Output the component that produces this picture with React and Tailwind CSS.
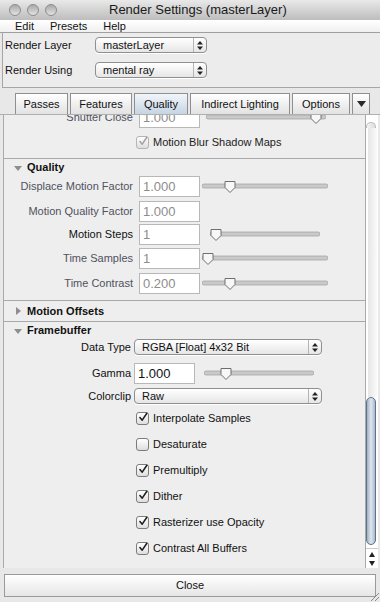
import React from "react";

const font = { fontFamily: '"Liberation Sans", Arial, sans-serif' };

// small up/down arrows used in popup menus
const UpDown = () => (
  <svg width="6" height="9" viewBox="0 0 6 9">
    <path d="M3 0 L6 3.5 L0 3.5 Z" fill="#222" />
    <path d="M3 9 L6 5.5 L0 5.5 Z" fill="#222" />
  </svg>
);

const Dropdown = ({ value, w }) => (
  <div
    className={`flex h-[16px] items-center rounded-[4px] border border-[#8f8f8f] bg-gradient-to-b from-white to-[#e6e6e6] shadow-[0_1px_0_#fff] ${w}`}
  >
    <span className="flex-1 pl-[7px] text-[11px] leading-none text-[#111]">{value}</span>
    <div className="flex h-full w-[13px] items-center justify-center border-l border-[#b5b5b5]">
      <UpDown />
    </div>
  </div>
);

const Field = ({ value, dim }) => (
  <div
    className={`flex h-[21px] w-[61px] items-center border border-[#b8b8b8] bg-white pl-[3px] text-[13px] ${
      dim ? "text-[#8d8d8d]" : "text-[#111]"
    }`}
  >
    {value}
  </div>
);

// slider track with pointed thumb
const Slider = ({ width, thumb }) => (
  <svg width={width} height="14" viewBox={`0 0 ${width} 14`}>
    <rect x="0" y="4" width={width} height="4" rx="2" fill="#c9c9c9" stroke="#a6a6a6" strokeWidth="0.8" />
    <path
      d={`M${thumb - 5} 1.5 h10 v6 l-5 5 l-5 -5 Z`}
      fill="#f7f7f7"
      stroke="#6f6f6f"
      strokeWidth="1"
    />
  </svg>
);

const Check = ({ on, dim }) => (
  <div
    className={`flex h-[13px] w-[13px] items-center justify-center rounded-[3px] border bg-gradient-to-b from-white to-[#dedede] ${
      dim ? "border-[#b4b4b4]" : "border-[#7c7c7c]"
    }`}
  >
    {on && (
      <svg width="13" height="13" viewBox="0 0 13 13" className="-mt-[2px] ml-[1px]">
        <path
          d="M2.5 6.5 L5.5 10 L11.5 1"
          fill="none"
          stroke={dim ? "#a3a3a3" : "#1d1d1d"}
          strokeWidth="2"
          strokeLinecap="round"
          strokeLinejoin="round"
        />
      </svg>
    )}
  </div>
);

const CheckRow = ({ label, on, dim, className = "" }) => (
  <div className={`flex h-[16px] items-center pl-[132px] ${className}`}>
    <Check on={on} dim={dim} />
    <span className={`ml-[4px] text-[11px] ${dim ? "text-[#222]" : "text-[#111]"}`}>{label}</span>
  </div>
);

const SliderRow = ({ label, value, dimLabel, dimValue, slider, className = "" }) => (
  <div className={`flex h-[21px] items-center ${className}`}>
    <span
      className={`w-[131px] pr-[2px] text-right text-[11px] ${dimLabel ? "text-[#4f5260]" : "text-[#111]"}`}
    >
      {label}
    </span>
    <div className="ml-[4px]">
      <Field value={value} dim={dimValue} />
    </div>
    {slider && <div className={slider.ml}><Slider width={slider.w} thumb={slider.t} /></div>}
  </div>
);

const Header = ({ label, open }) => (
  <div className="flex h-[17px] items-center pl-[9px]">
    <svg width="10" height="10" viewBox="0 0 10 10">
      {open ? <path d="M1 3 L9 3 L5 8 Z" fill="#8e8e8e" /> : <path d="M3 1 L8 5 L3 9 Z" fill="#8e8e8e" />}
    </svg>
    <span className="ml-[4px] text-[11px] font-bold text-[#111]">{label}</span>
  </div>
);

const tabs = [
  { label: "Passes", w: "w-[53px]" },
  { label: "Features", w: "w-[62px]" },
  { label: "Quality", w: "w-[54px]", active: true },
  { label: "Indirect Lighting", w: "w-[100px]" },
  { label: "Options", w: "w-[58px]" },
];

export default function App() {
  return (
    <div style={font} className="flex h-[602px] w-[380px] flex-col overflow-hidden bg-[#e8e8e8] text-[#111]">
      {/* title bar */}
      <div className="flex h-[20px] items-center bg-gradient-to-b from-[#e9e9e9] to-[#bdbdbd]">
        <div className="flex items-center gap-[6px] pl-[9px]">
          {[0, 1, 2].map((i) => (
            <div
              key={i}
              className="h-[12px] w-[12px] rounded-full border border-[#8c8c8c] bg-gradient-to-b from-[#a9a9a9] to-[#e3e3e3]"
            />
          ))}
        </div>
        <span className="ml-[52px] text-[13px] text-[#1a1a1a]">Render Settings (masterLayer)</span>
      </div>

      {/* menu bar */}
      <div className="flex h-[13px] items-center border-b border-[#9f9f9f] bg-gradient-to-b from-white to-[#f0f0f0] text-[11px]">
        <span className="ml-[15px]">Edit</span>
        <span className="ml-[16px]">Presets</span>
        <span className="ml-[16px]">Help</span>
      </div>

      {/* render layer / render using */}
      <div className="ml-[2px] flex h-[55px] flex-col border-b border-l border-[#a6a6a6] bg-[#ececec] pt-[4px]">
        <div className="flex h-[16px] items-center">
          <span className="w-[92px] pl-[2px] text-[11px]">Render Layer</span>
          <Dropdown value="masterLayer" w="w-[112px]" />
        </div>
        <div className="mt-[9px] flex h-[16px] items-center">
          <span className="w-[92px] pl-[2px] text-[11px]">Render Using</span>
          <Dropdown value="mental ray" w="w-[112px]" />
        </div>
      </div>

      {/* tabs */}
      <div className="mt-[5px] flex h-[22px] items-start border-b border-[#b0b0b0] pl-[15px]">
        {tabs.map((t) => (
          <div
            key={t.label}
            className={`mr-[2px] flex h-[21px] items-center justify-center border border-b-0 border-[#8f8f8f] text-[11px] ${t.w} ${
              t.active
                ? "bg-gradient-to-b from-[#f2f6fa] to-[#c6d4e3]"
                : "bg-gradient-to-b from-white to-[#e2e2e2]"
            }`}
          >
            {t.label}
          </div>
        ))}
        <div className="flex h-[21px] w-[18px] items-center justify-center border border-b-0 border-[#8f8f8f] bg-gradient-to-b from-white to-[#e2e2e2]">
          <svg width="9" height="6" viewBox="0 0 9 6">
            <path d="M0 0 H9 L4.5 6 Z" fill="#2a2a2a" />
          </svg>
        </div>
      </div>

      {/* scrolling content + scrollbar */}
      <div className="flex h-[453px]">
        <div className="ml-[3px] w-[363px] overflow-hidden border-l border-r border-[#a9a9a9] bg-[#eeeeee]">
          <div className="-mt-[8px]">
            <SliderRow
              label="Shutter Close"
              value="1.000"
              dimLabel
              dimValue
              slider={{ w: 120, t: 110, ml: "ml-[6px]" }}
            />
            <CheckRow label="Motion Blur Shadow Maps" on dim className="mt-[6px]" />
            <div className="h-[8px]" />
          </div>

          {/* Quality */}
          <div className="border-t border-[#a9a9a9] pb-[6px]">
            <Header label="Quality" open />
            <SliderRow
              label="Displace Motion Factor"
              value="1.000"
              dimLabel
              dimValue
              slider={{ w: 126, t: 28, ml: "ml-[2px]" }}
            />
            <SliderRow
              label="Motion Quality Factor"
              value="1.000"
              dimLabel
              dimValue
              className="mt-[4px]"
            />
            <SliderRow
              label="Motion Steps"
              value="1"
              dimValue
              className="mt-[2px]"
              slider={{ w: 110, t: 6, ml: "ml-[10px]" }}
            />
            <SliderRow
              label="Time Samples"
              value="1"
              dimLabel
              dimValue
              className="mt-[3px]"
              slider={{ w: 126, t: 6, ml: "ml-[2px]" }}
            />
            <SliderRow
              label="Time Contrast"
              value="0.200"
              dimLabel
              dimValue
              className="mt-[4px]"
              slider={{ w: 126, t: 28, ml: "ml-[2px]" }}
            />
          </div>

          {/* Motion Offsets */}
          <div className="flex h-[21px] items-center border-t border-[#a9a9a9]">
            <Header label="Motion Offsets" />
          </div>

          {/* Framebuffer */}
          <div className="border-t border-[#a9a9a9] pb-[12px]">
            <Header label="Framebuffer" open />
            <div className="flex h-[16px] items-center">
              <span className="w-[127px] text-right text-[11px]">Data Type</span>
              <div className="ml-[3px]">
                <Dropdown value="RGBA [Float] 4x32 Bit" w="w-[188px]" />
              </div>
            </div>
            <div className="mt-[8px] flex h-[21px] items-center">
              <span className="w-[127px] text-right text-[11px]">Gamma</span>
              <div className="ml-[3px]">
                <Field value="1.000" />
              </div>
              <div className="ml-[9px]">
                <Slider width={110} thumb={22} />
              </div>
            </div>
            <div className="mt-[4px] flex h-[16px] items-center">
              <span className="w-[127px] text-right text-[11px]">Colorclip</span>
              <div className="ml-[3px]">
                <Dropdown value="Raw" w="w-[188px]" />
              </div>
            </div>
            <CheckRow label="Interpolate Samples" on className="mt-[6px]" />
            <CheckRow label="Desaturate" className="mt-[10px]" />
            <CheckRow label="Premultiply" on className="mt-[10px]" />
            <CheckRow label="Dither" on className="mt-[10px]" />
            <CheckRow label="Rasterizer use Opacity" on className="mt-[10px]" />
            <CheckRow label="Contrast All Buffers" on className="mt-[10px]" />
          </div>
        </div>

        {/* scrollbar */}
        <div className="flex w-[12px] flex-col bg-white pt-[7px]">
          <div className="h-[6px] w-[10px] rounded-t-full border border-b-0 border-[#bdbdbd] bg-gradient-to-r from-[#f4f4f4] to-[#dcdcdc]" />
          <div className="mx-auto h-[269px] w-[9px] bg-gradient-to-r from-[#e6e6e6] to-[#fafafa]" />
          <div className="h-[148px] w-[10px] rounded-full border border-[#5f7288] bg-gradient-to-r from-[#9fb0c3] via-[#dfe7f0] to-[#a9b9cb]" />
          <div className="mt-[3px] flex flex-col items-center gap-[4px] border-t border-[#c9c9c9] pt-[3px]">
            <svg width="6" height="5" viewBox="0 0 6 5">
              <path d="M3 0 L6 5 L0 5 Z" fill="#222" />
            </svg>
            <svg width="6" height="5" viewBox="0 0 6 5">
              <path d="M3 5 L6 0 L0 0 Z" fill="#222" />
            </svg>
          </div>
        </div>
      </div>

      {/* close */}
      <div className="relative flex flex-1 items-start pt-[6px]">
        <div className="ml-[4px] flex h-[23px] w-[372px] items-center justify-center border border-[#9a9a9a] bg-gradient-to-b from-white to-[#e6e6e6] text-[11px]">
          Close
        </div>
        <svg className="absolute bottom-0 right-0" width="12" height="12" viewBox="0 0 12 12">
          <path d="M11 3 L3 11 M11 7 L7 11" stroke="#8a8a8a" strokeWidth="1" />
        </svg>
      </div>
    </div>
  );
}
